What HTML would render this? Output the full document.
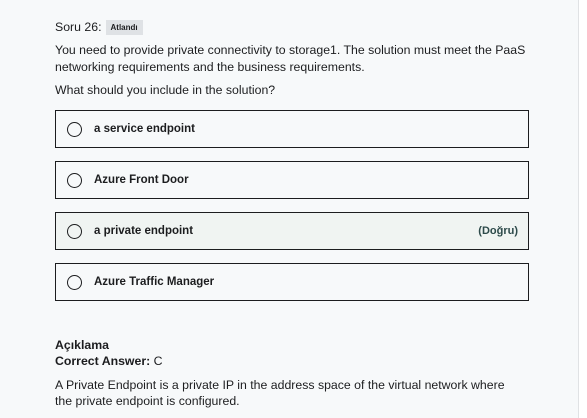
<!DOCTYPE html><html><head><style>
body{margin:0;width:587px;height:418px;background:#fff;font-family:"Liberation Sans",sans-serif;color:#1c1d1f;overflow:hidden;position:relative}
.main{position:absolute;left:0;top:0;width:578px;height:418px;background:#f7f9fa;border-right:1px solid #e0e2e4}
.t{position:absolute;left:55px;font-size:12.3px;white-space:nowrap}
.badge{display:inline-block;background:#dfe2e5;font-size:8px;font-weight:bold;padding:3px 5px;margin-left:4px;vertical-align:1px}
.opt{position:absolute;left:55px;width:472px;height:36px;border:1px solid #1c1d1f;background:#f7f9fa}
.opt .c{position:absolute;left:11px;top:11px;width:13px;height:13px;border:1px solid #1c1d1f;border-radius:50%}
.opt .l{position:absolute;left:38px;top:12px;font-size:11.5px;font-weight:bold}
.opt .r{position:absolute;right:10px;top:12px;font-size:11px;font-weight:bold;color:#2d4a4a}
</style></head><body><div class="main">
<div class="t" style="top:20px">Soru 26:<span class="badge">Atlandı</span></div>
<div class="t" style="top:42px;line-height:17px">You need to provide private connectivity to storage1. The solution must meet the PaaS<br>networking requirements and the business requirements.</div>
<div class="t" style="top:83px">What should you include in the solution?</div>
<div class="opt" style="top:110px"><div class="c"></div><div class="l">a service endpoint</div></div>
<div class="opt" style="top:161px"><div class="c"></div><div class="l">Azure Front Door</div></div>
<div class="opt" style="top:212px;background:#f0f4f2"><div class="c"></div><div class="l">a private endpoint</div><div class="r">(Doğru)</div></div>
<div class="opt" style="top:263px"><div class="c"></div><div class="l">Azure Traffic Manager</div></div>
<div class="t" style="top:338px;font-weight:bold">Açıklama</div>
<div class="t" style="top:354px"><b>Correct Answer:</b> C</div>
<div class="t" style="top:377px;line-height:16px">A Private Endpoint is a private IP in the address space of the virtual network where<br>the private endpoint is configured.</div>
</div></body></html>
